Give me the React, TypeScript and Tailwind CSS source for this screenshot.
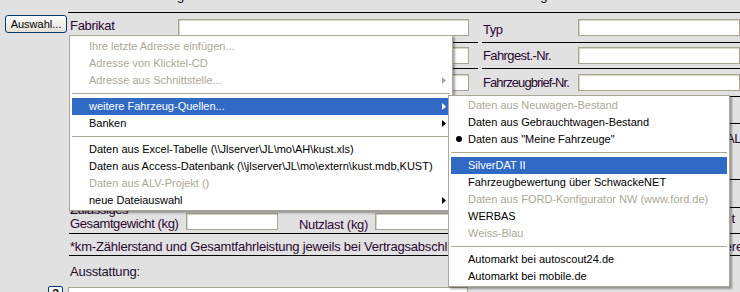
import React from "react";

type Item = {
  label?: string;
  disabled?: boolean;
  sub?: boolean;
  active?: boolean;
  bullet?: boolean;
  sep?: boolean;
};

const mainItems: Item[] = [
  { label: "Ihre letzte Adresse einfügen...", disabled: true },
  { label: "Adresse von Klicktel-CD", disabled: true },
  { label: "Adresse aus Schnittstelle...", disabled: true, sub: true },
  { sep: true },
  { label: "weitere Fahrzeug-Quellen...", sub: true, active: true },
  { label: "Banken", sub: true },
  { sep: true },
  { label: "Daten aus Excel-Tabelle (\\\\Jlserver\\JL\\mo\\AH\\kust.xls)" },
  { label: "Daten aus Access-Datenbank (\\\\jlserver\\JL\\mo\\extern\\kust.mdb,KUST)" },
  { label: "Daten aus ALV-Projekt ()", disabled: true },
  { label: "neue Dateiauswahl", sub: true },
];

const subItems: Item[] = [
  { label: "Daten aus Neuwagen-Bestand", disabled: true },
  { label: "Daten aus Gebrauchtwagen-Bestand" },
  { label: 'Daten aus "Meine Fahrzeuge"', bullet: true },
  { sep: true },
  { label: "SilverDAT II", active: true },
  { label: "Fahrzeugbewertung über SchwackeNET" },
  { label: "Daten aus FORD-Konfigurator NW (www.ford.de)", disabled: true },
  { label: "WERBAS" },
  { label: "Weiss-Blau", disabled: true },
  { sep: true },
  { label: "Automarkt bei autoscout24.de" },
  { label: "Automarkt bei mobile.de" },
];

function Arrow({ color }: { color: string }) {
  return (
    <svg width="4" height="7" viewBox="0 0 4 7" className="shrink-0">
      <path d="M0 0 L4 3.5 L0 7 Z" fill={color} />
    </svg>
  );
}

function MenuRow({ it }: { it: Item }) {
  if (it.sep) {
    return (
      <div className="h-[9px] flex items-center">
        <div className="h-px w-full bg-[#aca899]" />
      </div>
    );
  }
  const color = it.active ? "text-white" : it.disabled ? "text-[#aca899]" : "text-black";
  const arrowColor = it.active ? "#ffffff" : it.disabled ? "#aca899" : "#000000";
  return (
    <div
      className={`relative h-[17px] flex items-center pl-[17px] pr-[4px] ${
        it.active ? "bg-[#316ac5]" : ""
      } ${color}`}
    >
      {it.bullet && (
        <span className="absolute left-[5px] top-[5px] w-[6px] h-[6px] rounded-full bg-black" />
      )}
      <span className="flex-1 whitespace-nowrap leading-[17px]">{it.label}</span>
      {it.sub && <Arrow color={arrowColor} />}
    </div>
  );
}

function Input({ className }: { className: string }) {
  return (
    <div
      className={`h-[17px] bg-white border border-[#a9a595] shadow-[inset_1px_1px_0_#d9d6c8] ${className}`}
    />
  );
}

export default function App() {
  return (
    <div className="relative w-[740px] h-[292px] overflow-hidden bg-[#e1e1e1] font-['Liberation_Sans',Arial,sans-serif] text-[13px] text-[#2a0830]">
      {/* row 0: clipped heading */}
      <div className="flex h-[13px]">
        <div className="w-[68px] shrink-0" />
        <div className="flex-1 border-b border-black overflow-hidden">
          <div className="-mt-[12px] leading-[15px] whitespace-nowrap text-black flex">
            <span className="ml-[109px]">g</span>
            <span className="ml-[356px]">g</span>
          </div>
        </div>
      </div>

      {/* row 1 */}
      <div className="flex h-[30px]">
        <div className="w-[69px] shrink-0 pl-[5px] pt-[2px]">
          <button className="w-[62px] h-[18px] rounded-[3px] border border-[#003c74] bg-gradient-to-b from-white to-[#e3e0d6] text-[11px] text-black font-['Liberation_Sans',Arial,sans-serif] leading-[16px] flex items-center justify-center">
            Auswahl...
          </button>
        </div>
        <div className="w-[409px] shrink-0 border-b border-black flex items-center">
          <div className="w-[109px] self-start pt-[3px] pl-[1px] tracking-[-0.3px]">Fabrikat</div>
          <Input className="w-[291px]" />
        </div>
        <div className="w-[4px] shrink-0" />
        <div className="flex-1 border-b border-black flex items-center">
          <div className="w-[96px] shrink-0 pl-[1px] pt-[4px] tracking-[-0.5px]">Typ</div>
          <Input className="flex-1" />
        </div>
      </div>

      {/* row 2 */}
      <div className="flex h-[26px]">
        <div className="w-[69px] shrink-0" />
        <div className="w-[409px] shrink-0 border-b border-black flex items-center">
          <div className="w-[109px] shrink-0" />
          <Input className="w-[291px]" />
        </div>
        <div className="w-[4px] shrink-0" />
        <div className="flex-1 border-b border-black flex items-center">
          <div className="w-[96px] shrink-0 pl-[1px] whitespace-nowrap tracking-[-0.6px]">Fahrgest.-Nr.</div>
          <Input className="flex-1" />
        </div>
      </div>

      {/* row 3 */}
      <div className="flex h-[28px]">
        <div className="w-[69px] shrink-0" />
        <div className="w-[409px] shrink-0 border-b border-black flex items-center">
          <div className="w-[109px] shrink-0" />
          <Input className="w-[291px]" />
        </div>
        <div className="w-[4px] shrink-0" />
        <div className="flex-1 border-b border-black flex items-center">
          <div className="w-[96px] shrink-0 pl-[1px] whitespace-nowrap tracking-[-0.9px]">Fahrzeugbrief-Nr.</div>
          <Input className="flex-1" />
        </div>
      </div>

      {/* row 4 */}
      <div className="flex h-[27px]">
        <div className="w-[69px] shrink-0" />
        <div className="w-[409px] shrink-0 border-b border-black" />
        <div className="w-[4px] shrink-0" />
        <div className="flex-1 border-b border-black" />
      </div>

      {/* row 5 */}
      <div className="flex h-[56px]">
        <div className="w-[69px] shrink-0" />
        <div className="w-[409px] shrink-0 border-b border-black" />
        <div className="w-[4px] shrink-0" />
        <div className="flex-1 border-b border-black flex justify-end overflow-hidden pt-[5px]">
          <span className="mr-[-1px] whitespace-nowrap tracking-[-0.5px]">AL</span>
        </div>
      </div>

      {/* row 6 */}
      <div className="flex h-[28px]">
        <div className="w-[69px] shrink-0" />
        <div className="flex-1 border-b border-black" />
      </div>

      {/* row 7 */}
      <div className="flex h-[26px]">
        <div className="w-[69px] shrink-0" />
        <div className="w-[409px] shrink-0 border-b border-black flex items-start">
          <div className="w-[117px] shrink-0 pl-[1px] -mt-[5px] leading-[14px] tracking-[-0.4px] whitespace-nowrap">
            Zulässiges
            <br />
            Gesamtgewicht (kg)
          </div>
          <Input className="w-[92px] mt-[5px]" />
          <div className="ml-[21px] w-[76px] shrink-0 pt-[7px] tracking-[-0.3px] whitespace-nowrap">Nutzlast (kg)</div>
          <Input className="w-[100px] mt-[5px]" />
        </div>
        <div className="w-[4px] shrink-0" />
        <div className="flex-1 border-b border-black flex justify-end overflow-hidden pt-[1px]">
          <span className="mr-[5px]">t</span>
        </div>
      </div>

      {/* row 8 */}
      <div className="flex h-[22px]">
        <div className="w-[69px] shrink-0" />
        <div className="flex-1 border-b border-black pl-[1px] pt-[3px] whitespace-nowrap overflow-hidden tracking-[-0.2px] relative">
          *km-Zählerstand und Gesamtfahrleistung jeweils bei Vertragsabschluss und bei Vertragsende angeben
          <span className="absolute right-[-3px] top-[3px]">ere</span>
        </div>
      </div>

      {/* row 9 */}
      <div className="flex h-[28px]">
        <div className="w-[69px] shrink-0" />
        <div className="flex-1 pl-[1px] pt-[6px] text-[#1a1030] tracking-[-0.2px]">Ausstattung:</div>
      </div>

      {/* row 10 */}
      <div className="flex h-[12px]">
        <div className="w-[68px] shrink-0 flex justify-end pr-[5px] pt-[2px]">
          <div className="w-[15px] h-[15px] rounded-[2px] border border-[#003c74] bg-gradient-to-b from-white to-[#e3e0d6] text-[11px] font-bold text-black leading-[13px] text-center">
            ?
          </div>
        </div>
        <div className="w-[400px] mt-[3px] bg-white border border-[#a9a595]" />
      </div>

      {/* main context menu */}
      <div className="absolute left-[69px] top-[35px] w-[384px] bg-white border border-[#aca899] px-[2px] pt-[2px] pb-[1px] shadow-[2px_2px_2px_rgba(0,0,0,0.35)] font-['Liberation_Sans',Arial,sans-serif] text-[11px]">
        {mainItems.map((it, i) => (
          <MenuRow key={i} it={it} />
        ))}
      </div>

      {/* submenu */}
      <div className="absolute left-[448px] top-[95px] w-[282px] bg-white border border-[#aca899] px-[2px] pt-[1px] pb-[1px] shadow-[2px_2px_2px_rgba(0,0,0,0.35)] font-['Liberation_Sans',Arial,sans-serif] text-[11px]">
        {subItems.map((it, i) => (
          <MenuRow key={i} it={it} />
        ))}
      </div>
    </div>
  );
}
